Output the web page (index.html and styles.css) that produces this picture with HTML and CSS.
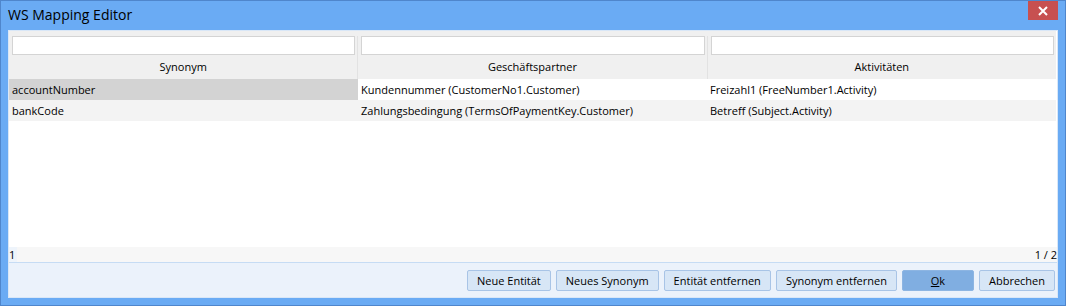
FILE: index.html
```html
<!DOCTYPE html>
<html lang="de">
<head>
    <meta charset="UTF-8">
    <title>WS Mapping Editor</title>
    <link rel="stylesheet" href="styles.css">
</head>
<body>
    <div class="window">
        <div class="titlebar">
            <span class="title">WS Mapping Editor</span>
            <button class="close" type="button" aria-label="Schließen">
                <svg width="10" height="10" viewBox="0 0 10 10">
                    <path d="M1 1 L9 9 M9 1 L1 9" stroke="#fff" stroke-width="2"/>
                </svg>
            </button>
        </div>

        <div class="client">
            <!-- Tabelle mit Filterzeile -->
            <div class="grid">
                <div class="head">
                    <div class="col">
                        <input class="filter" type="text">
                        <div class="label">Synonym</div>
                    </div>
                    <div class="col">
                        <input class="filter" type="text">
                        <div class="label">Geschäftspartner</div>
                    </div>
                    <div class="col">
                        <input class="filter" type="text">
                        <div class="label">Aktivitäten</div>
                    </div>
                </div>
                <div class="row">
                    <div class="cell selected">accountNumber</div>
                    <div class="cell">Kundennummer (CustomerNo1.Customer)</div>
                    <div class="cell">Freizahl1 (FreeNumber1.Activity)</div>
                </div>
                <div class="row alt">
                    <div class="cell">bankCode</div>
                    <div class="cell">Zahlungsbedingung (TermsOfPaymentKey.Customer)</div>
                    <div class="cell">Betreff (Subject.Activity)</div>
                </div>
            </div>

            <div class="status">
                <span class="count">1</span>
                <span>1 / 2</span>
            </div>

            <!-- Schaltflächen -->
            <div class="buttons">
                <button class="btn" type="button">Neue Entität</button>
                <button class="btn" type="button">Neues Synonym</button>
                <button class="btn" type="button">Entität entfernen</button>
                <button class="btn" type="button">Synonym entfernen</button>
                <button class="btn ok" type="button"><u>O</u>k</button>
                <button class="btn" type="button">Abbrechen</button>
            </div>
        </div>
    </div>
</body>
</html>
```

FILE: styles.css
```css
* {
    box-sizing: border-box;
}

body {
    margin: 0;
    font-family: "Open Sans", "Noto Sans", sans-serif;
    font-size: 11px;
    color: #000;
}

/* Fensterrahmen */
.window {
    width: 1066px;
    height: 306px;
    background-color: #6aabf4;
    border: 1px solid #4f86cc;
    display: flex;
    flex-direction: column;
}

.titlebar {
    height: 29px;
    display: flex;
    align-items: flex-start;
    justify-content: space-between;
    padding-left: 7px;
}

.title {
    font-size: 14px;
    line-height: 28px;
}

.close {
    width: 30px;
    height: 19px;
    margin-right: 7px;
    border: none;
    padding: 0;
    background-color: #c75050;
    display: flex;
    align-items: center;
    justify-content: center;
}

/* Inhaltsbereich */
.client {
    flex: 1;
    margin: 0 7px 7px;
    background-color: #fff;
    border: 1px solid #d9e7f7;
    display: flex;
    flex-direction: column;
}

.grid {
    flex: 1;
    background-color: #fff;
}

.head {
    display: flex;
    background-color: #f0f0f0;
    padding-top: 5px;
    margin-right: 1px;
}

.col {
    flex: 1;
    border-right: 1px solid #e2e2e2;
}

.col:last-child {
    border-right: none;
}

.filter {
    display: block;
    width: calc(100% - 5px);
    height: 19px;
    margin-left: 3px;
    border: 1px solid #d4d4d4;
    background-color: #fff;
    font: inherit;
}

.label {
    height: 24px;
    line-height: 23px;
    text-align: center;
}

.row {
    display: flex;
    height: 21px;
    margin-right: 1px;
}

.row.alt {
    background-color: #f3f3f3;
}

.cell {
    flex: 1;
    padding-left: 3px;
    line-height: 21px;
    white-space: nowrap;
    overflow: hidden;
}

.cell.selected {
    background-color: #d3d3d3;
}

/* Statuszeile */
.status {
    height: 16px;
    display: flex;
    justify-content: space-between;
    background-color: #f7f7f7;
    border-bottom: 1px solid #c6dcf4;
    line-height: 15px;
}

.count {
    background-color: #eef4fb;
    padding-right: 2px;
}

/* Schaltflächen */
.buttons {
    height: 34px;
    background-color: #ebf2fb;
    display: flex;
    justify-content: flex-end;
    align-items: center;
    gap: 5px;
    padding-right: 2px;
    padding-top: 1px;
}

.btn {
    height: 21px;
    padding: 0 9px;
    font: inherit;
    font-size: 11px;
    background-color: #d7e6f6;
    border: 1px solid #a8c4e6;
    border-radius: 2px;
    color: #000;
}

.btn.ok {
    width: 72px;
    background-color: #80aee1;
    border-color: #8db5e2;
}

.btn u {
    text-decoration: underline;
}
```
